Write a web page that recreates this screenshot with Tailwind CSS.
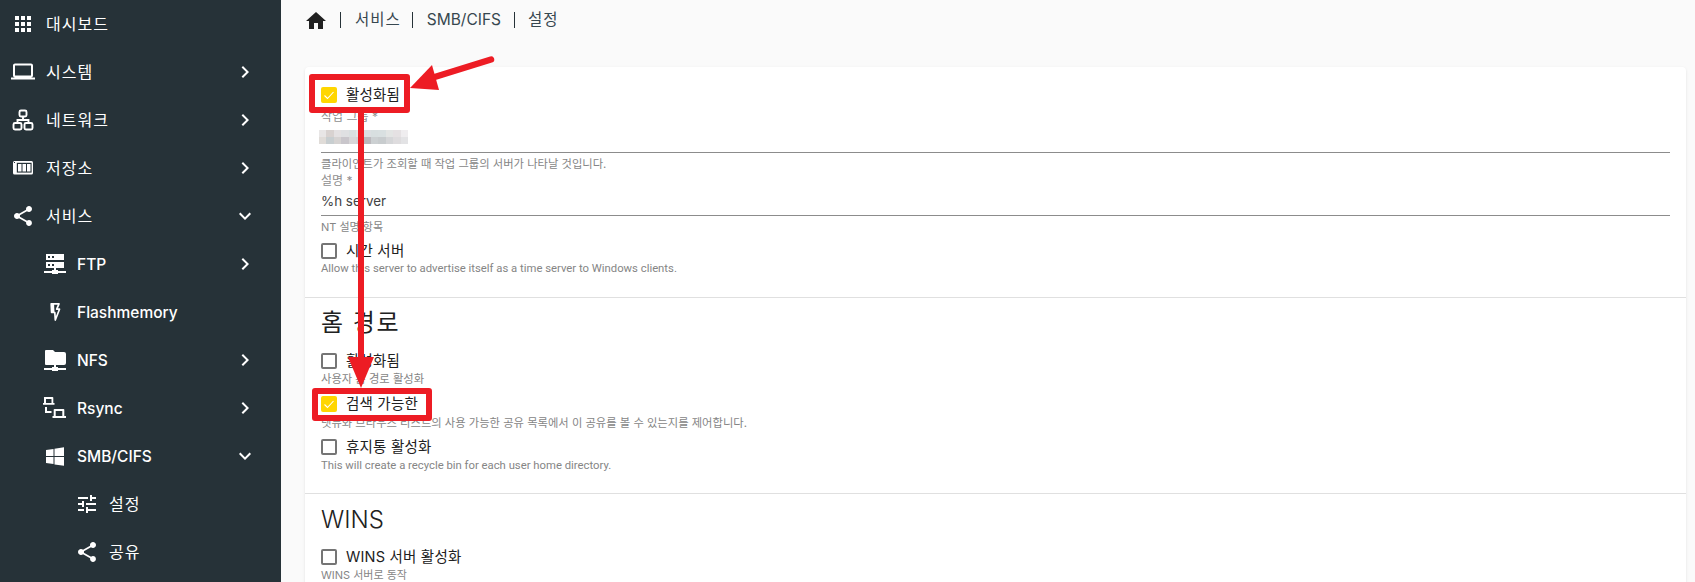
<!DOCTYPE html>
<html lang="ko">
<head>
<meta charset="utf-8">
<title>SMB/CIFS</title>
<script src="https://cdn.jsdelivr.net/npm/@tailwindcss/browser@4"></script>
</head>
<body class="h-[582px] w-[1695px] overflow-hidden bg-[#fafafa] font-['Inter','Noto_Sans_CJK_KR',sans-serif] relative">
<div class="flex h-[582px]">
  <!-- Sidebar -->
  <nav class="w-[281px] shrink-0 bg-[#263238] text-white text-[15.500px] font-medium">
    <div class="flex h-12 items-center pl-[11px] pr-[24px]">
      <svg class="w-6 h-6 mr-[11px]" viewBox="0 0 24 24" fill="#fff"><path d="M4 8h4V4H4v4zm6 12h4v-4h-4v4zm-6 0h4v-4H4v4zm0-6h4v-4H4v4zm6 0h4v-4h-4v4zm6-10v4h4V4h-4zm-6 4h4V4h-4v4zm6 6h4v-4h-4v4zm0 6h4v-4h-4v4z"/></svg>
      <span class="flex-1 font-normal text-[16px] tracking-[1px]">대시보드</span>
    </div>
    <div class="flex h-12 items-center pl-[11px] pr-[24px]">
      <svg class="w-6 h-6 mr-[11px]" viewBox="0 0 24 24" fill="#fff"><path d="M20 18c1.100 0 2-.9 2-2V6c0-1.100-.9-2-2-2H4c-1.100 0-2 .9-2 2v10c0 1.100.9 2 2 2H0v2h24v-2h-4zM4 6h16v10H4V6z" transform="translate(0,-.5)"/></svg>
      <span class="flex-1 font-normal text-[16px] tracking-[1px]">시스템</span>
      <svg class="w-6 h-6" viewBox="0 0 24 24" fill="#fff"><path d="M8.590 16.590 13.170 12 8.590 7.410 10 6l6 6-6 6z"/></svg>
    </div>
    <div class="flex h-12 items-center pl-[11px] pr-[24px]">
      <svg class="w-6 h-6 mr-[11px]" viewBox="0 0 24 24" fill="none" stroke="#fff" stroke-width="1.900"><rect x="8.500" y="2.500" width="7" height="6" rx="1.500"/><rect x="2.500" y="15" width="8" height="6.500" rx="1.500"/><rect x="13.500" y="15" width="8" height="6.500" rx="1.500"/><path d="M12 8.500v3.500M6.500 15v-3h11v3"/></svg>
      <span class="flex-1 font-normal text-[16px] tracking-[1px]">네트워크</span>
      <svg class="w-6 h-6" viewBox="0 0 24 24" fill="#fff"><path d="M8.590 16.590 13.170 12 8.590 7.410 10 6l6 6-6 6z"/></svg>
    </div>
    <div class="flex h-12 items-center pl-[11px] pr-[24px]">
      <svg class="w-6 h-6 mr-[11px]" viewBox="0 0 24 24"><rect x="2" y="5" width="20" height="13.500" rx="1.500" fill="#fff"/><rect x="5.800" y="6.800" width="14.800" height="9.800" fill="#263238"/><path d="M7 8h3.500v7.500H7zM11.500 8H15v7.500h-3.500zM16 8h3.500v7.500H16z" fill="#fff"/><rect x="3" y="6" width="1" height="1" fill="#263238"/></svg>
      <span class="flex-1 font-normal text-[16px] tracking-[1px]">저장소</span>
      <svg class="w-6 h-6" viewBox="0 0 24 24" fill="#fff"><path d="M8.590 16.590 13.170 12 8.590 7.410 10 6l6 6-6 6z"/></svg>
    </div>
    <div class="flex h-12 items-center pl-[11px] pr-[24px]">
      <svg class="w-6 h-6 mr-[11px]" viewBox="0 0 24 24" fill="#fff"><path d="M18 16.080c-.76 0-1.440.3-1.960.77L8.910 12.700c.05-.23.09-.46.09-.7s-.04-.47-.09-.7l7.050-4.110c.54.5 1.250.81 2.040.81 1.660 0 3-1.340 3-3s-1.340-3-3-3-3 1.340-3 3c0 .24.04.47.09.7L8.040 9.810C7.500 9.310 6.790 9 6 9c-1.660 0-3 1.340-3 3s1.340 3 3 3c.79 0 1.500-.31 2.040-.81l7.120 4.160c-.05.21-.08.43-.08.65 0 1.610 1.310 2.920 2.920 2.920s2.920-1.310 2.920-2.920-1.310-2.920-2.920-2.920z"/></svg>
      <span class="flex-1 font-normal text-[16px] tracking-[1px]">서비스</span>
      <svg class="w-6 h-6" viewBox="0 0 24 24" fill="#fff"><path d="M7.410 8.590 12 13.170l4.590-4.580L18 10l-6 6-6-6z"/></svg>
    </div>
    <div class="flex h-12 items-center pl-[43px] pr-[24px]">
      <svg class="w-6 h-6 mr-[10px]" viewBox="0 0 24 24" fill="#fff"><path fill-rule="evenodd" d="M3 2h18v6H3V2zm2 2v2h2V4H5zm4 0v2h2V4H9zM3 10h18v6h-8v2h2v1h8v2h-8v1H9v-1H1v-2h8v-1h2v-2H3v-6zm2 2v2h2v-2H5zm4 0v2h2v-2H9z"/></svg>
      <span class="flex-1 pt-[2px]">FTP</span>
      <svg class="w-6 h-6" viewBox="0 0 24 24" fill="#fff"><path d="M8.590 16.590 13.170 12 8.590 7.410 10 6l6 6-6 6z"/></svg>
    </div>
    <div class="flex h-12 items-center pl-[43px] pr-[24px]">
      <svg class="w-6 h-6 mr-[10px]" viewBox="0 0 24 24"><path d="M8.200 3.800H16L13.700 9.200H16.500L12.300 20 11.800 12.500H8.600Z" fill="none" stroke="#fff" stroke-width="1.700" stroke-linejoin="round"/><path d="M8 3h3l.5 9.500H8.500z" fill="#fff"/></svg>
      <span class="flex-1 pt-[2px]">Flashmemory</span>
    </div>
    <div class="flex h-12 items-center pl-[43px] pr-[24px]">
      <svg class="w-6 h-6 mr-[10px]" viewBox="0 0 24 24" fill="#fff"><path d="M3 2h7l2 2h9a2 2 0 0 1 2 2v9a2 2 0 0 1-2 2h-8v2h2v1h8v2h-8v1H9v-1H1v-2h8v-1h2v-2H3a1 1 0 0 1-1-1V3a1 1 0 0 1 1-1z"/></svg>
      <span class="flex-1 pt-[2px]">NFS</span>
      <svg class="w-6 h-6" viewBox="0 0 24 24" fill="#fff"><path d="M8.590 16.590 13.170 12 8.590 7.410 10 6l6 6-6 6z"/></svg>
    </div>
    <div class="flex h-12 items-center pl-[43px] pr-[24px]">
      <svg class="w-6 h-6 mr-[10px]" viewBox="0 0 24 24" fill="#fff"><path fill-rule="evenodd" d="M1.500 1h8a.8.8 0 0 1 .8.8V7h1.200v1.800H0V7h1V1.800a.5.5 0 0 1 .5-.8zM3 3v4h5.500V3H3zM2 11h2v4h4.500v2H2v-6zM11.500 13h9a.8.8 0 0 1 .8.8V20H23v2H9.500v-2h1.200v-6.200a.8.8 0 0 1 .8-.8zm1.200 2v5h6.600v-5h-6.600z"/></svg>
      <span class="flex-1 pt-[2px]">Rsync</span>
      <svg class="w-6 h-6" viewBox="0 0 24 24" fill="#fff"><path d="M8.590 16.590 13.170 12 8.590 7.410 10 6l6 6-6 6z"/></svg>
    </div>
    <div class="flex h-12 items-center pl-[43px] pr-[24px]">
      <svg class="w-6 h-6 mr-[10px]" viewBox="0 0 24 24" fill="#fff"><path d="M3 12V5.900l7.500-1V12H3zm8.500-7.300L21 3.300V12h-9.500V4.700zM3 13h7.500v7.100l-7.500-1V13zm8.500 0H21v8.700l-9.500-1.300V13z"/></svg>
      <span class="flex-1 pt-[2px]">SMB/CIFS</span>
      <svg class="w-6 h-6" viewBox="0 0 24 24" fill="#fff"><path d="M7.410 8.590 12 13.170l4.590-4.580L18 10l-6 6-6-6z"/></svg>
    </div>
    <div class="flex h-12 items-center pl-[75px] pr-[24px]">
      <svg class="w-6 h-6 mr-[10px]" viewBox="0 0 24 24" fill="#fff"><path d="M3 17v2h6v-2H3zM3 5v2h10V5H3zm10 16v-2h8v-2h-8v-2h-2v6h2zM7 9v2H3v2h4v2h2V9H7zm14 4v-2H11v2h10zm-6-4h2V7h4V5h-4V3h-2v6z"/></svg>
      <span class="flex-1 font-normal text-[16px] tracking-[1px]">설정</span>
    </div>
    <div class="flex h-12 items-center pl-[75px] pr-[24px]">
      <svg class="w-6 h-6 mr-[10px]" viewBox="0 0 24 24" fill="#fff"><path d="M18 16.080c-.76 0-1.440.3-1.960.77L8.910 12.700c.05-.23.09-.46.09-.7s-.04-.47-.09-.7l7.050-4.110c.54.5 1.250.81 2.040.81 1.660 0 3-1.340 3-3s-1.340-3-3-3-3 1.340-3 3c0 .24.04.47.09.7L8.040 9.810C7.500 9.310 6.790 9 6 9c-1.660 0-3 1.340-3 3s1.340 3 3 3c.79 0 1.500-.31 2.040-.81l7.120 4.160c-.05.21-.08.43-.08.65 0 1.610 1.310 2.920 2.920 2.920s2.920-1.310 2.920-2.920-1.310-2.920-2.920-2.920z"/></svg>
      <span class="flex-1 font-normal text-[16px] tracking-[1px]">공유</span>
    </div>
  </nav>

  <!-- Main -->
  <main class="flex-1 min-w-0 pl-6 pr-[9px] overflow-hidden">
    <div class="flex items-center h-[40px] text-[15.500px] text-[#37474f]">
      <svg class="w-6 h-6 -ml-[1px] mt-[1px] text-[#212121]" viewBox="0 0 24 24" fill="currentColor"><path d="M10 20v-6h4v6h5v-8h3L12 3 2 12h3v8z"/></svg>
      <span class="w-px h-4 bg-[#263238] ml-[12px] mr-[14px]"></span>
      <span class="tracking-[1px]">서비스</span>
      <span class="w-px h-4 bg-[#263238] ml-[11px] mr-[14px]"></span>
      <span>SMB/CIFS</span>
      <span class="w-px h-4 bg-[#263238] mx-[13px]"></span>
      <span class="tracking-[1px]">설정</span>
    </div>
    <div class="mt-[27px] bg-white rounded-[4px] shadow-[0_1px_3px_rgba(0,0,0,0.10)] h-[600px] text-[#212121]">
      <section class="px-4 pt-[20px] h-[231px] border-b border-[#e0e0e0]">
        <label class="flex items-center h-4 gap-[9px] text-[14.500px] tracking-[.2px]"><span class="w-4 h-4 bg-[#ffd600] rounded-[2px] flex items-center justify-center"><svg class="w-3 h-3" viewBox="0 0 12 12" fill="none" stroke="#fff" stroke-width="1.100"><path d="M1.500 6.500 4.500 9.500 10.500 3"/></svg></span>활성화됨</label>
        <div class="mt-[6px] text-[12px] leading-[16px] text-[#8f8f8f]">작업 그룹 *</div>
        <div class="relative h-[28px] text-[13.500px] leading-[20px] pt-[1px] border-b border-[#8c8c8c] text-[#424242]"><span class="pl-[78px]">P</span>
          <div class="absolute left-[-2px] top-[5px] w-[89px] h-[7px] flex">
            <span class="flex-1 bg-[#e8e6e6]"></span><span class="flex-1 bg-[#d8d2d0]"></span><span class="flex-1 bg-[#e4e1e2]"></span><span class="flex-1 bg-[#dfe0e2]"></span><span class="flex-1 bg-[#d9dfe0]"></span><span class="flex-1 bg-[#e3e6e7]"></span><span class="flex-1 bg-[#dcdfe2]"></span><span class="flex-1 bg-[#d8dfe0]"></span><span class="flex-1 bg-[#d9e0e1]"></span><span class="flex-1 bg-[#e3e5e4]"></span><span class="flex-1 bg-[#e5e1e3]"></span><span class="flex-1 bg-[#efedef]"></span>
          </div>
          <div class="absolute left-[-2px] top-[12px] w-[89px] h-[7px] flex">
            <span class="flex-1 bg-[#e0dcd8]"></span><span class="flex-1 bg-[#c8ced0]"></span><span class="flex-1 bg-[#d6d3d2]"></span><span class="flex-1 bg-[#c9c6cb]"></span><span class="flex-1 bg-[#d8d6d8]"></span><span class="flex-1 bg-[#d3d3d6]"></span><span class="flex-1 bg-[#bbb9bd]"></span><span class="flex-1 bg-[#ccd0d2]"></span><span class="flex-1 bg-[#c8ccce]"></span><span class="flex-1 bg-[#d5d6d8]"></span><span class="flex-1 bg-[#dedcde]"></span><span class="flex-1 bg-[#e3e3e5]"></span>
          </div>
        </div>
        <p class="mt-[4px] text-[11.300px] leading-[15px] text-[#858585]">클라이언트가 조회할 때 작업 그룹의 서버가 나타날 것입니다.</p>
        <div class="mt-[1px] text-[12px] leading-[16px] text-[#8f8f8f]">설명 *</div>
        <div class="h-[27px] pt-[2px] text-[13.400px] leading-[20px] border-b border-[#8c8c8c] text-[#424242]">%h server</div>
        <p class="mt-[1px] text-[11px] leading-[20px] text-[#858585]">NT 설명 항목</p>
        <label class="flex items-center h-4 mt-[6px] gap-[9px] text-[14.500px] tracking-[.2px]"><span class="w-4 h-4 border-2 border-[#757575] rounded-[2px]"></span>시간 서버</label>
        <p class="mt-[2px] text-[11.300px] font-['Roboto','Noto_Sans_CJK_KR',sans-serif] leading-[15px] text-[#858585]">Allow this server to advertise itself as a time server to Windows clients.</p>
      </section>
      <section class="px-4 pt-[9px] h-[196px] border-b border-[#e0e0e0]">
        <h2 class="text-[24px] leading-[32px] font-normal tracking-[1.500px]">홈 경로</h2>
        <label class="flex items-center h-4 mt-[14px] gap-[9px] text-[14.500px] tracking-[.2px]"><span class="w-4 h-4 border-2 border-[#757575] rounded-[2px]"></span>활성화됨</label>
        <p class="mt-[3px] text-[11.300px] leading-[15px] text-[#858585]">사용자 홈 경로 활성화</p>
        <label class="flex items-center h-4 mt-[9px] gap-[9px] text-[14.500px] tracking-[.2px]"><span class="w-4 h-4 bg-[#ffd600] rounded-[2px] flex items-center justify-center"><svg class="w-3 h-3" viewBox="0 0 12 12" fill="none" stroke="#fff" stroke-width="1.100"><path d="M1.500 6.500 4.500 9.500 10.500 3"/></svg></span>검색 가능한</label>
        <p class="mt-[4px] text-[11.300px] leading-[15px] text-[#858585]">넷뉴와 브라우즈 리스트의 사용 가능한 공유 목록에서 이 공유를 볼 수 있는지를 제어합니다.</p>
        <label class="flex items-center h-4 mt-[8px] gap-[9px] text-[14.500px] tracking-[.2px]"><span class="w-4 h-4 border-2 border-[#757575] rounded-[2px]"></span>휴지통 활성화</label>
        <p class="mt-[3px] text-[11.300px] font-['Roboto','Noto_Sans_CJK_KR',sans-serif] leading-[15px] text-[#858585]">This will create a recycle bin for each user home directory.</p>
      </section>
      <section class="px-4 pt-[10px]">
        <h2 class="text-[24px] leading-[32px] font-light">WINS</h2>
        <label class="flex items-center h-4 mt-[13px] gap-[9px] text-[14.500px] tracking-[.2px]"><span class="w-4 h-4 border-2 border-[#757575] rounded-[2px]"></span>WINS 서버 활성화</label>
        <p class="mt-[3px] text-[11px] leading-[15px] text-[#858585]">WINS 서버로 동작</p>
      </section>
    </div>
  </main>
</div>
<!-- Red annotations -->
<div class="absolute left-[309px] top-[74px] w-[101px] h-[39px] border-[6px] border-[#ed1c24] rounded-[3px]"></div>
<div class="absolute left-[312px] top-[388px] w-[120px] h-[33px] border-[6px] border-[#ed1c24] rounded-[3px]"></div>
<svg class="absolute left-0 top-0 pointer-events-none" width="1695" height="582" viewBox="0 0 1695 582" fill="#ed1c24">
  <path d="M491 59.500 L425 80" stroke="#ed1c24" stroke-width="6.500" stroke-linecap="round" fill="none"/>
  <path d="M410 88 L432 65 L439 90 Z"/>
  <rect x="358" y="113" width="6" height="245"/>
  <path d="M348 357 H374 L361 388 Z"/>
</svg>
</body>
</html>
